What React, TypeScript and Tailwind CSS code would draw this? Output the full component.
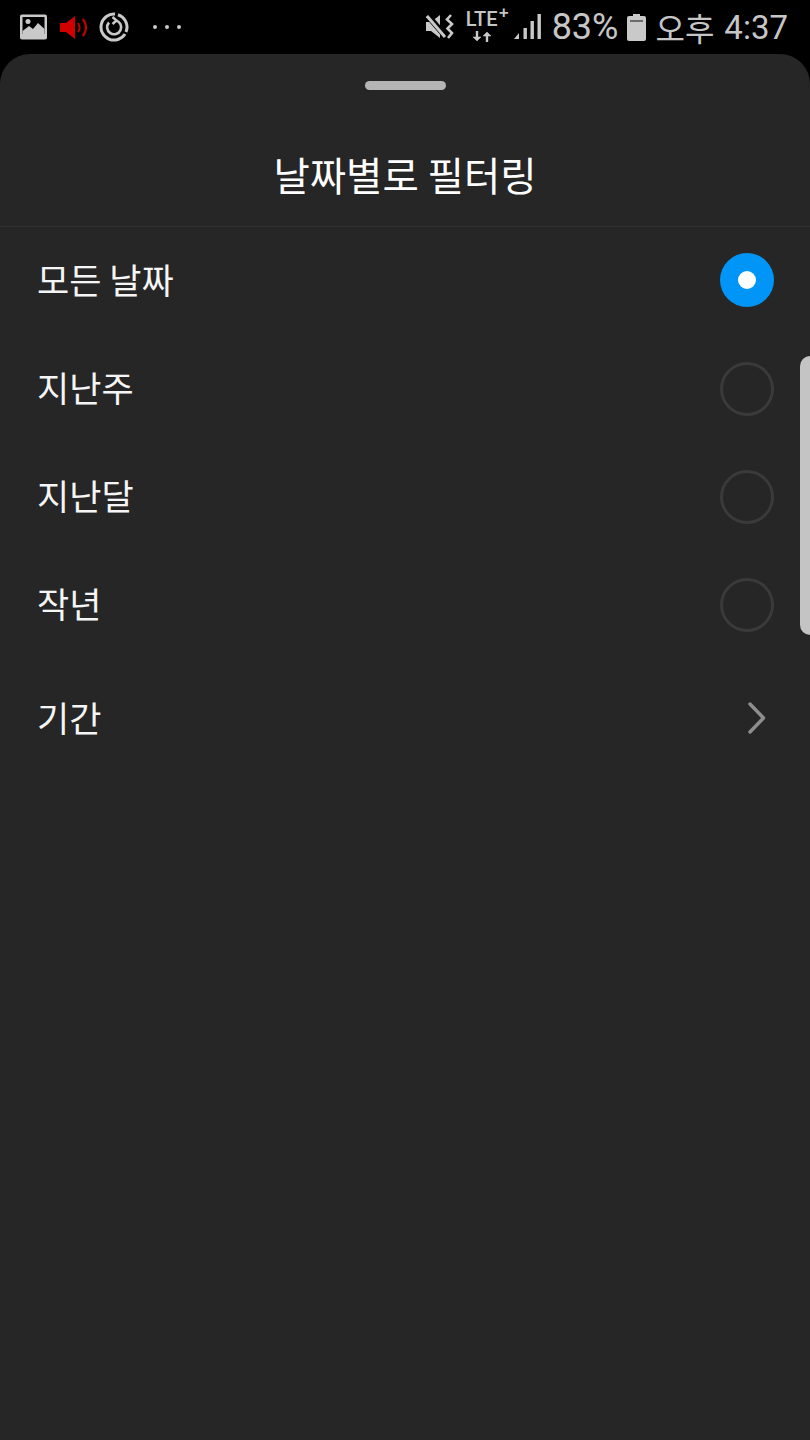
import React from "react";

const F = { fontFamily: '"Noto Sans CJK KR", "Noto Sans", sans-serif' };

function Radio({ on }: { on?: boolean }) {
  if (on)
    return (
      <div className="w-[54px] h-[54px] rounded-full bg-[#0095f6] flex items-center justify-center">
        <div className="w-[18px] h-[18px] rounded-full bg-white" />
      </div>
    );
  return <div className="mt-[1px] w-[54px] h-[54px] rounded-full border-[3px] border-[#3a3a3a]" />;
}

function Row({ label, on }: { label: string; on?: boolean }) {
  return (
    <div className="h-[108px] flex items-center justify-between pl-[37px] pr-[36px]">
      <span className="text-[35px] leading-none text-[#f5f5f5] mb-[3px]">{label}</span>
      <Radio on={on} />
    </div>
  );
}

function StatusBar() {
  return (
    <div className="h-[54px] bg-black flex items-center justify-between pl-[20px] pr-[22px] text-[#c6c6c6]">
      <div className="flex items-center">
        <svg width="27" height="26" viewBox="0 0 27 26">
          <rect width="27" height="25" x="0" y="0.5" rx="2" fill="#c9c9c9" />
          <rect x="2.5" y="3" width="22" height="17" fill="#000" />
          <circle cx="8" cy="7.5" r="2.5" fill="#c9c9c9" />
          <path d="M2.5 20 L2.5 17 L9 12 L13 15 L18 9 L24.5 15 L24.5 20Z" fill="#c9c9c9" />
        </svg>
        <svg className="ml-[13px]" width="29" height="25" viewBox="0 0 29 25">
          <path d="M0 8 H6 L15 1 V24 L6 17 H0Z" fill="#d00000" />
          <path d="M18 8 Q21 12.5 18 17" stroke="#c00000" strokeWidth="2" fill="none" />
          <path d="M23 4 Q29 12.5 23 21" stroke="#c00000" strokeWidth="2.2" fill="none" />
        </svg>
        <svg className="ml-[10px]" width="30" height="30" viewBox="0 0 30 30" fill="none" stroke="#c9c9c9">
          <path d="M26 22 A13 13 0 1 1 16 2.1" strokeWidth="3" />
          <path d="M19 2.7 A13 13 0 0 1 27 20" strokeWidth="3" />
          <path d="M10 10.5 A7 7 0 1 0 17 8.5" strokeWidth="2.6" />
          <path d="M13.5 5 L17.5 8.5 L13.5 12" strokeWidth="2.4" />
        </svg>
        <div className="ml-[24px] flex gap-[8px]">
          <div className="w-[4px] h-[4px] rounded-full bg-[#c9c9c9]" />
          <div className="w-[4px] h-[4px] rounded-full bg-[#c9c9c9]" />
          <div className="w-[4px] h-[4px] rounded-full bg-[#c9c9c9]" />
        </div>
      </div>
      <div className="flex items-center">
        <svg width="30" height="28" viewBox="0 0 30 28" fill="none">
          <path d="M0 9 H5 L14 2 V25 L5 18 H0Z" fill="#c9c9c9" />
          <path d="M2 3 L21 25" stroke="#000" strokeWidth="6" />
          <path d="M1 3 L19 24" stroke="#c9c9c9" strokeWidth="3" />
          <path d="M25 2 L21 6.5 L26 11 L21.5 15.5 L26 20 L22 25" stroke="#c9c9c9" strokeWidth="2.6" />
        </svg>
        <div className="ml-[10px] relative w-[49px] h-[32px]">
          <span
            className="absolute left-0 top-[-6px] text-[20px] leading-[28px] font-medium"
            style={{ fontFamily: '"Roboto", sans-serif' }}
          >
            LTE
          </span>
          <span
            className="absolute left-[33px] top-[-8px] text-[17px] leading-[20px] font-bold"
            style={{ fontFamily: '"Liberation Sans", sans-serif' }}
          >
            +
          </span>
          <svg className="absolute left-[6px] top-[20px]" width="20" height="11" viewBox="0 0 20 11" fill="#c9c9c9" stroke="#c9c9c9" strokeWidth="2.4">
            <path d="M5 0 V7" />
            <path d="M1 6 H9 L5 10Z" strokeWidth="0.5" />
            <path d="M15 11 V4" />
            <path d="M11 5 H19 L15 1Z" strokeWidth="0.5" />
          </svg>
        </div>
        <svg className="ml-[-1px]" width="28" height="28" viewBox="0 0 28 28">
          <path d="M0 26 L5 20 V26Z" fill="#c9c9c9" />
          <rect x="9.5" y="15" width="3.4" height="11" fill="#c9c9c9" />
          <rect x="16.5" y="8" width="3.4" height="18" fill="#c9c9c9" />
          <rect x="23.5" y="1" width="3.4" height="25" fill="#c9c9c9" />
        </svg>
        <span className="ml-[10px] text-[36px] leading-none" style={{ fontFamily: '"Roboto", sans-serif' }}>
          83%
        </span>
        <svg className="ml-[9px]" width="19" height="27" viewBox="0 0 19 27">
          <path d="M6 0 H13 V2 H17 Q19 2 19 4 V25 Q19 27 17 27 H2 Q0 27 0 25 V4 Q0 2 2 2 H6Z" fill="#c9c9c9" />
          <rect x="3" y="6" width="13" height="2" fill="#6b6b6b" />
        </svg>
        <span className="ml-[9px] text-[32px] leading-none" style={F}>
          오후
        </span>
        <span className="ml-[10px] text-[33px] leading-none" style={{ fontFamily: '"Roboto", sans-serif' }}>
          4:37
        </span>
      </div>
    </div>
  );
}

export default function App() {
  return (
    <div className="relative w-[810px] h-[1440px] bg-black overflow-hidden" style={F}>
      <StatusBar />
      <div className="h-[1386px] bg-[#262626] rounded-t-[30px] flex flex-col">
        <div className="pt-[27px] flex justify-center">
          <div className="w-[81px] h-[9px] rounded-full bg-[#b5b5b5]" />
        </div>
        <div className="h-[137px] mb-[-1px] flex flex-col">
          <div className="flex-1 flex items-center justify-center">
            <span className="text-[39.5px] leading-none text-white mt-[32px]">날짜별로 필터링</span>
          </div>
          <div className="h-px bg-[#303030]" />
        </div>
        <Row label="모든 날짜" on />
        <Row label="지난주" />
        <Row label="지난달" />
        <Row label="작년" />
        <div className="h-[120px] flex items-center justify-between pl-[37px] pr-[44px]">
          <span className="text-[35px] leading-none text-[#f5f5f5] mb-[3px]">기간</span>
          <svg width="20" height="34" viewBox="0 0 20 34" fill="none" stroke="#8e8e8e" strokeWidth="3.4" strokeLinecap="round" strokeLinejoin="round">
            <path d="M4 3 L17.5 17 L4 31" />
          </svg>
        </div>
      </div>
      <div className="absolute right-0 top-[356px] w-[10px] h-[279px] bg-[#c4c4c4] rounded-l-[10px]" />
    </div>
  );
}
